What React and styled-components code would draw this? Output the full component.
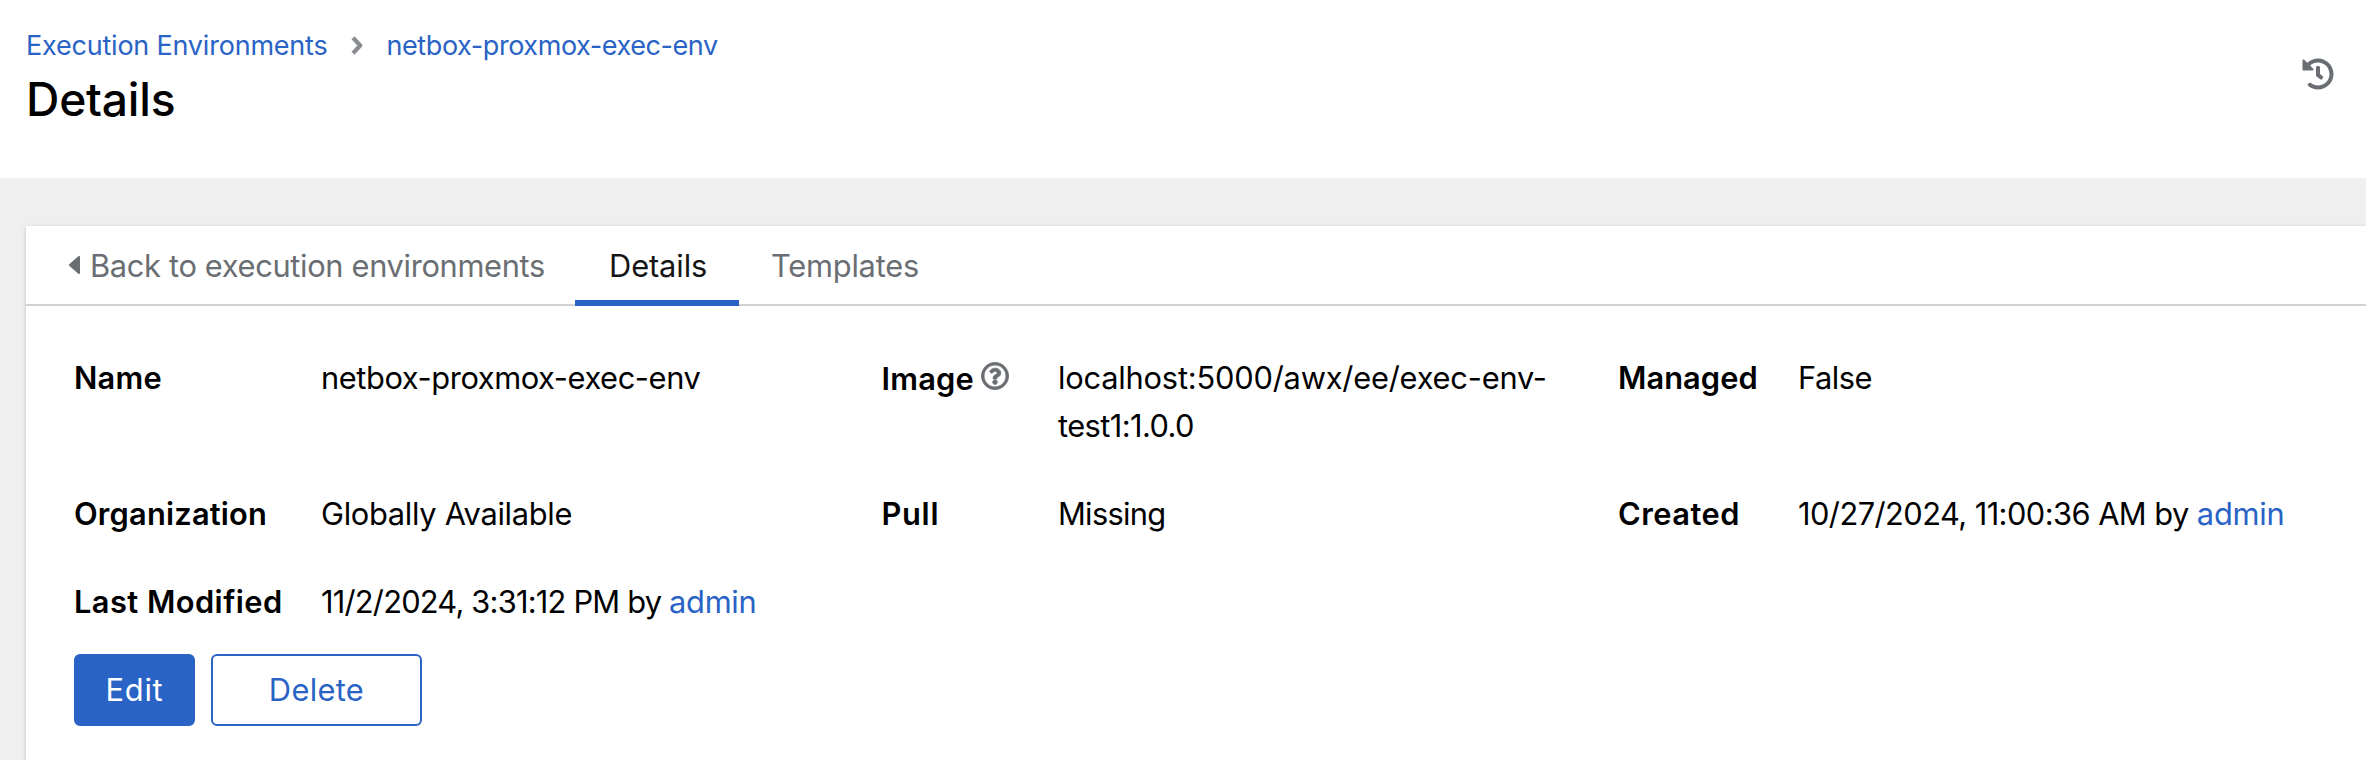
import React from 'react';
import styled, { createGlobalStyle } from 'styled-components';
import { FaHistory, FaRegQuestionCircle } from 'react-icons/fa';

const GlobalStyle = createGlobalStyle`
  *, *::before, *::after { box-sizing: border-box; }
  html, body { margin: 0; padding: 0; overflow: hidden; }
  body { background: #efefef; }
`;

const Page = styled.div`
  display: flex;
  flex-direction: column;
  width: 100%;
  height: 100vh;
  overflow: hidden;
  background: #efefef;
  color: #000;
  font-family: Inter, "Liberation Sans", sans-serif;
  font-size: 30.8px;
  line-height: 48px;
`;

const Header = styled.header`
  display: flex;
  flex: none;
  justify-content: space-between;
  height: 178px;
  padding: 24px 32px 0 26px;
  background: #fff;
`;

const Breadcrumb = styled.nav`
  display: flex;
  align-items: center;
  height: 42px;
  margin-bottom: 2px;
  padding-top: 2px;
  font-size: 27px;
  line-height: 42px;
`;

const Link = styled.a`
  color: #2963c5;
  letter-spacing: ${(p) => p.$tracking || 0}px;
  white-space: nowrap;
`;

const Divider = styled.svg`
  width: 12px;
  height: 19px;
  margin: 0 24px 2px 23px;
`;

const Title = styled.h1`
  margin: 0;
  font-size: 46.2px;
  font-weight: 500;
  letter-spacing: -0.2px;
  line-height: 62px;
`;

const HistoryButton = styled.button`
  display: flex;
  align-self: flex-start;
  margin-top: 34px;
  padding: 0;
  border: 0;
  background: none;
  color: #6a6e73;
  font-size: 32px;
`;

const Card = styled.main`
  flex: 1;
  margin: 48px 0 0 26px;
  background: #fff;
  box-shadow: 0 2px 4px rgba(3, 3, 3, 0.14), 0 0 4px rgba(3, 3, 3, 0.08);
`;

const Tabs = styled.div`
  display: flex;
  height: 80px;
  padding-left: 43px;
  box-shadow: inset 0 -2px 0 #d2d2d2;
`;

const Tab = styled.button`
  display: flex;
  align-items: flex-start;
  width: ${(p) => p.$width}px;
  height: 80px;
  padding: 16px 0 0 ${(p) => p.$inset || 0}px;
  border: 0;
  border-bottom: 6px solid ${(p) => (p.$active ? '#2963c5' : 'transparent')};
  background: none;
  color: ${(p) => (p.$active ? '#151515' : '#6a6e73')};
  font: inherit;
  letter-spacing: ${(p) => p.$tracking}px;
  white-space: nowrap;
`;

const Caret = styled.svg`
  flex: none;
  width: 11px;
  height: 18px;
  margin: 14px 10px 0 0;
`;

const DetailGrid = styled.dl`
  display: grid;
  grid-template-columns: 247px 560.5px 176.5px 560px 180px 1fr;
  row-gap: 40px;
  margin: 0;
  padding: 48px 0 0 48px;
`;

const Label = styled.dt`
  display: flex;
  font-weight: 600;
  letter-spacing: ${(p) => p.$tracking}px;
  white-space: nowrap;
`;

const HelpLabel = styled(Label)`
  padding-top: 1px;
  svg {
    margin: 7px 0 0 7px;
    color: #6a6e73;
    font-size: 28px;
    overflow: visible;
    stroke-width: 14px;
  }
`;

const Value = styled.dd`
  margin: 0;
  letter-spacing: ${(p) => p.$tracking}px;
  white-space: nowrap;
`;

const Line = styled.span`
  display: block;
  letter-spacing: ${(p) => p.$tracking}px;
`;

const Actions = styled.div`
  display: flex;
  gap: 16px;
  padding: 28px 0 0 48px;
`;

const Button = styled.button`
  width: ${(p) => p.$width}px;
  height: 72px;
  padding: 0;
  border: 2px solid #2963c5;
  border-radius: 6px;
  background: ${(p) => (p.$primary ? '#2963c5' : '#fff')};
  color: ${(p) => (p.$primary ? '#fff' : '#2963c5')};
  font: inherit;
  letter-spacing: ${(p) => p.$tracking}px;
`;

export default function App() {
  return (
    <Page>
      <GlobalStyle />
      <Header>
        <div>
          <Breadcrumb>
            <Link $tracking={-0.21}>Execution Environments</Link>
            <Divider viewBox="0 0 12 19" fill="none" stroke="#8a8d90" strokeWidth="4.2" strokeLinejoin="round">
              <path d="M2 1.8 9.2 9.5 2 17.2" />
            </Divider>
            <Link $tracking={-0.42}>netbox-proxmox-exec-env</Link>
          </Breadcrumb>
          <Title>Details</Title>
        </div>
        <HistoryButton aria-label="History"><FaHistory /></HistoryButton>
      </Header>
      <Card>
        <Tabs>
          <Tab $width={506} $tracking={-0.33}>
            <Caret viewBox="0 0 11 18" fill="currentColor">
              <path d="M11 1v16c0 .9-1 1.3-1.7.7L.5 9.9a1.2 1.2 0 0 1 0-1.8L9.3.3C10-.3 11 .1 11 1z" />
            </Caret>
            Back to execution environments
          </Tab>
          <Tab $width={164} $inset={34} $tracking={-0.1} $active>Details</Tab>
          <Tab $width={211} $inset={32} $tracking={-0.22}>Templates</Tab>
        </Tabs>
        <DetailGrid>
          <Label $tracking={0.2}>Name</Label>
          <Value $tracking={-0.41}>netbox-proxmox-exec-env</Value>
          <HelpLabel $tracking={0.2}>Image<FaRegQuestionCircle /></HelpLabel>
          <Value>
            <Line $tracking={-0.2}>localhost:5000/awx/ee/exec-env-</Line>
            <Line $tracking={-0.58}>test1:1.0.0</Line>
          </Value>
          <Label $tracking={0.05}>Managed</Label>
          <Value $tracking={-0.5}>False</Value>

          <Label $tracking={0.2}>Organization</Label>
          <Value $tracking={-0.3}>Globally Available</Value>
          <Label $tracking={0.7}>Pull</Label>
          <Value $tracking={-0.7}>Missing</Value>
          <Label $tracking={0.5}>Created</Label>
          <Value $tracking={-0.55}>
            10/27/2024, 11:00:36 AM by <Link $tracking={-0.2}>admin</Link>
          </Value>

          <Label $tracking={0.45}>Last Modified</Label>
          <Value $tracking={-0.78}>
            11/2/2024, 3:31:12 PM by <Link $tracking={-0.3}>admin</Link>
          </Value>
        </DetailGrid>
        <Actions>
          <Button $width={121} $tracking={0.72} $primary>Edit</Button>
          <Button $width={211} $tracking={0.33}>Delete</Button>
        </Actions>
      </Card>
    </Page>
  );
}
